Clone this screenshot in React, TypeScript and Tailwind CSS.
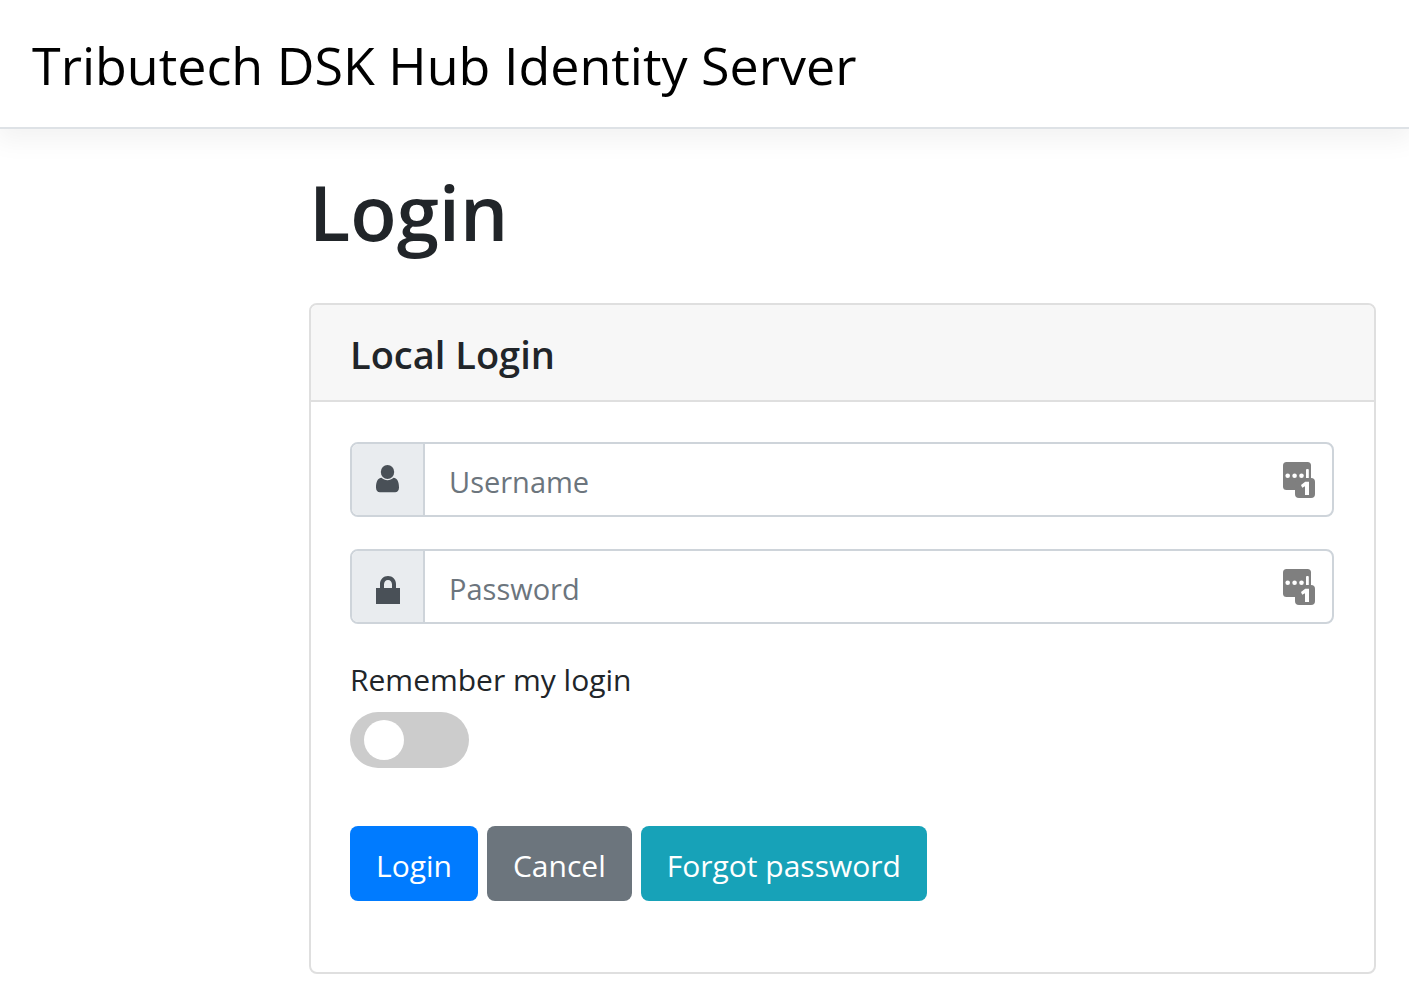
import type { ReactNode } from "react";

function UserIcon() {
  return (
    <svg viewBox="0 0 24 30" className="h-[30px] w-6" fill="currentColor" aria-hidden="true">
      <ellipse cx="11.500" cy="7" rx="6.700" ry="7" />
      <path d="M5.500 12.800C1.500 13 0 17.500 0 22.500C0 25.500 1.500 27.200 4 27.200H19C21.500 27.200 23 25.500 23 22.500C23 17.500 21.500 13 17.500 12.800C15.800 14.400 13.800 15.200 11.500 15.200S7.200 14.400 5.500 12.800Z" />
    </svg>
  );
}

function LockIcon() {
  return (
    <svg viewBox="0 -7 24 35" className="h-[35px] w-6" fill="currentColor" aria-hidden="true">
      <path fillRule="evenodd" d="M0 12H4V8C4 3.500 7.500 0 12 0S20 3.500 20 8V12H24V28H0ZM8 12H16V8.500C16 5.800 14.400 4 12 4S8 5.800 8 8.500Z" />
    </svg>
  );
}

function ManagerBadge() {
  return (
    <svg viewBox="0 0 32 36" className="mr-[17px] h-9 w-8 shrink-0" aria-hidden="true">
      <rect width="28" height="28" rx="3.500" fill="#7f7f7f" />
      <g fill="#fff">
        <circle cx="4.700" cy="13.800" r="2.300" />
        <circle cx="11.600" cy="13.800" r="2.300" />
        <circle cx="18.500" cy="13.800" r="2.300" />
        <rect x="23" y="7" width="2.800" height="10" rx="1" />
      </g>
      <rect x="12" y="16" width="20" height="20" rx="4" fill="#7f7f7f" />
      <path fill="#fff" d="M22.200 19.800H26V33H22V24.300L19.200 25.700L18 23Z" />
    </svg>
  );
}

type FieldProps = { id: string; label: string; type: string; icon: ReactNode };

function Field({ id, label, type, icon }: FieldProps) {
  return (
    <div className="mb-8 flex h-[75px] overflow-hidden rounded-lg border-2 border-[#ced4da] bg-white">
      <label htmlFor={id} aria-label={label} className="flex w-[73px] shrink-0 items-center justify-center border-r-2 border-[#ced4da] bg-[#e9ecef] text-[#495057]">
        {icon}
      </label>
      <input id={id} type={type} placeholder={label} className="min-w-0 flex-1 px-6 pt-1 text-[29px] outline-none placeholder:text-[#6c757d]" />
      <div className="flex items-center">
        <ManagerBadge />
      </div>
    </div>
  );
}

export default function App() {
  return (
    <div className="min-h-screen overflow-x-hidden bg-white font-['Open_Sans','Noto_Sans',sans-serif] text-[#212529]">
      <header className="border-b-2 border-[#dee2e6] px-8 pt-[25px] pb-[22px] shadow-[0_8px_24px_4px_rgba(0,0,0,0.05)]">
        <a href="#" className="block text-[52px] leading-20 text-black">Tributech DSK Hub Identity Server</a>
      </header>
      <main className="mr-[33px] ml-[309px]">
        <h1 className="pt-[37px] text-[76px] leading-[92px] font-semibold">Login</h1>
        <section className="mt-[45px] overflow-hidden rounded-lg border-2 border-[#dfdfdf]">
          <h2 className="border-b-2 border-[#dfdfdf] bg-[#f7f7f7] pt-[25px] pr-10 pb-[22px] pl-[39px] text-[38px] leading-12 font-semibold">Local Login</h2>
          <form className="pt-10 pr-10 pb-[71px] pl-[39px]" onSubmit={(e) => e.preventDefault()}>
            <Field id="username" label="Username" type="text" icon={<UserIcon />} />
            <Field id="password" label="Password" type="password" icon={<LockIcon />} />
            <label htmlFor="remember" className="block text-[30px] leading-12">Remember my login</label>
            <input id="remember" type="checkbox" className="mt-2 block h-14 w-[119px] appearance-none rounded-full bg-[#ccc] before:mt-2 before:ml-[14px] before:block before:size-10 before:rounded-full before:bg-white checked:bg-[#007bff] checked:before:ml-16" />
            <div className="mt-[58px] flex flex-wrap gap-[9px] text-[30px] text-white">
              <button type="submit" className="h-[75px] rounded-lg bg-[#007bff] px-[26px] pt-1">Login</button>
              <button type="button" className="h-[75px] rounded-lg bg-[#6c757d] px-[26px] pt-1">Cancel</button>
              <button type="button" className="h-[75px] rounded-lg bg-[#17a2b8] px-[26px] pt-1">Forgot password</button>
            </div>
          </form>
        </section>
      </main>
    </div>
  );
}
